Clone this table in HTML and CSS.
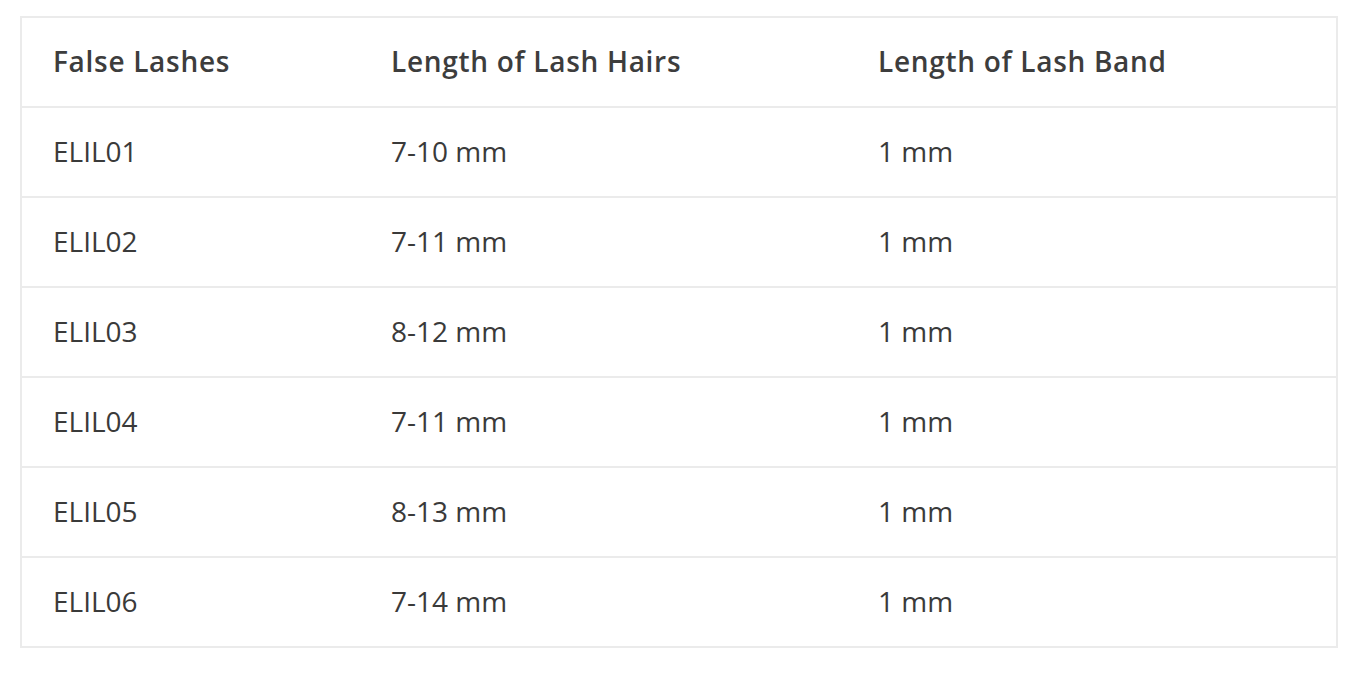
FILE: index.html
```html
<!DOCTYPE html>
<html>
<head>
<meta charset="utf-8">
<link rel="stylesheet" href="styles.css">
</head>
<body>
<div class="wrap">
<table class="lash-table">
  <colgroup>
    <col class="c1"><col class="c2"><col class="c3">
  </colgroup>
  <thead>
    <tr><th>False Lashes</th><th>Length of Lash Hairs</th><th>Length of Lash Band</th></tr>
  </thead>
  <tbody>
    <tr><td>ELIL01</td><td>7-10 mm</td><td>1 mm</td></tr>
    <tr><td>ELIL02</td><td>7-11 mm</td><td>1 mm</td></tr>
    <tr><td>ELIL03</td><td>8-12 mm</td><td>1 mm</td></tr>
    <tr><td>ELIL04</td><td>7-11 mm</td><td>1 mm</td></tr>
    <tr><td>ELIL05</td><td>8-13 mm</td><td>1 mm</td></tr>
    <tr><td>ELIL06</td><td>7-14 mm</td><td>1 mm</td></tr>
  </tbody>
</table>
</div>
</body>
</html>
```
FILE: styles.css
```css
html, body {
  margin: 0;
  padding: 0;
  background: #fff;
}
.wrap {
  padding: 16px 0 0 20px;
}
.lash-table {
  width: 1318px;
  box-sizing: border-box;
  border: 2px solid #ebebeb;
  border-collapse: separate;
  border-spacing: 0;
  table-layout: fixed;
  font-family: "Open Sans", Lato, sans-serif;
  color: #3a3a3a;
  font-size: 28px;
}
.c1 { width: 338px; }
.c2 { width: 487px; }
.c3 { width: 489px; }
.lash-table th,
.lash-table td {
  height: 88px;
  padding: 0 0 3px 31px;
  text-align: left;
  vertical-align: middle;
  box-sizing: border-box;
}
.lash-table td {
  border-top: 2px solid #ebebeb;
  height: 90px;
  font-weight: 400;
}
.lash-table th {
  font-weight: 600;
  letter-spacing: 0.7px;
  color: #3d3d3d;
}
```
